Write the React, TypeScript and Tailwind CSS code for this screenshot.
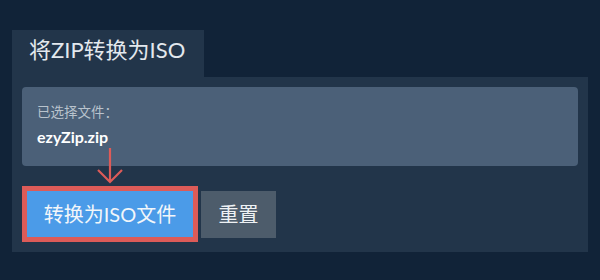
export default function App() {
  const font = { fontFamily: 'Lato, "Noto Sans CJK SC", sans-serif' };
  return (
    <div className="w-[600px] h-[280px] bg-[#112338] pt-[30px] px-[12px]" style={font}>
      <div className="w-[192px] h-[47px] bg-[#22354a] pl-[17px] pt-[5px] text-[22px] leading-[30px] text-[#e3e8ee]">
        将ZIP转换为ISO
      </div>
      <div className="relative w-[576px] bg-[#22354a] p-[10px]">
        <div className="rounded-[4px] bg-[#4b6078] pl-[15px] pt-[15px] pb-[17px]">
          <div className="text-[13.5px] leading-[20px] text-[#b9c3cd]">已选择文件：</div>
          <div className="mt-[3px] text-[16px] leading-[24px] font-bold text-white">ezyZip.zip</div>
        </div>
        <div className="mt-[20px] flex items-center">
          <div className="border-[5px] border-[#dd5b58]">
            <div className="flex h-[46px] w-[166px] items-center justify-center bg-[#4b9be8] text-[20px] text-[#f2f6fa]">
              转换为ISO文件
            </div>
          </div>
          <div className="ml-[3px] flex h-[47px] w-[75px] items-center justify-center bg-[#4d5c6b] text-[20px] text-[#eef1f4]">
            重置
          </div>
        </div>
        <svg className="absolute left-[84px] top-[71px]" width="30" height="38" viewBox="0 0 30 38">
          <path d="M14 0 V34 M2 22 L14 34 L26 22" fill="none" stroke="#dd5b58" strokeWidth="2.2" />
        </svg>
      </div>
    </div>
  );
}
